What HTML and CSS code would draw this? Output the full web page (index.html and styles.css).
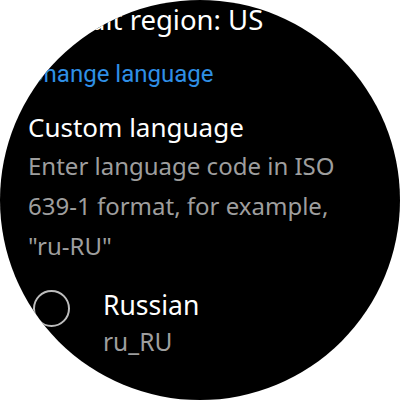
FILE: index.html
```html
<!DOCTYPE html>
<html lang="en">
<head>
  <meta charset="UTF-8">
  <meta name="viewport" content="width=device-width, initial-scale=1.0">
  <title>Language settings</title>
  <link rel="stylesheet" href="styles.css">
</head>
<body>
  <div class="watch">
    <div class="list">
      <div class="row region">Default region: US</div>
      <div class="row link">Change language</div>
      <div class="row custom">
        <div class="title">Custom language</div>
        <div class="desc">Enter language code in ISO 639-1 format, for example, "ru-RU"</div>
      </div>
      <div class="option">
        <span class="radio"></span>
        <div class="option-text">
          <div class="title">Russian</div>
          <div class="code">ru_RU</div>
        </div>
      </div>
    </div>
  </div>
</body>
</html>
```

FILE: styles.css
```css
body {
  margin: 0;
  background: #fff;
  font-family: "Noto Sans", Roboto, sans-serif;
}

.watch {
  width: 400px;
  height: 400px;
  border-radius: 50%;
  overflow: hidden;
  background: #000;
}

.list {
  display: flex;
  flex-direction: column;
  gap: 15px;
  padding: 1px 28px 0;
}

.row,
.title {
  color: #fff;
  font-size: 26px;
  line-height: 38px;
}

.region {
  font-size: 27.5px;
}

/* link label renders narrower than the titles */
.link {
  color: #2f8fe6;
  font-family: Roboto, "Noto Sans", sans-serif;
  font-size: 24px;
  padding-top: 2px;
  line-height: 36px;
}

.custom {
  margin-top: 1px;
}

.desc {
  color: #9e9e9e;
  font-size: 24px;
  line-height: 40px;
}

.option {
  display: flex;
  align-items: flex-start;
  gap: 33px;
  margin-top: 5px;
  margin-left: 5px;
}

.radio {
  width: 33px;
  height: 33px;
  margin-top: 4px;
  border: 2px solid #bdbdbd;
  border-radius: 50%;
  flex-shrink: 0;
}

.option-text .title {
  font-size: 26.5px;
}

.code {
  color: #9e9e9e;
  font-size: 24.5px;
  line-height: 36px;
}
```
